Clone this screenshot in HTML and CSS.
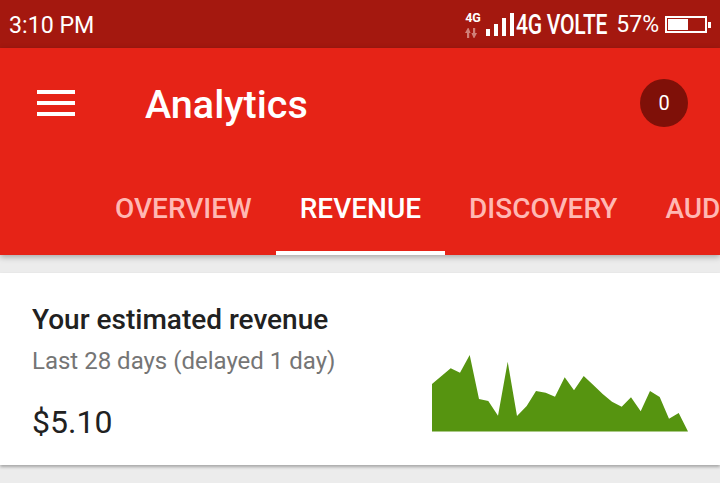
FILE: index.html
```html
<!DOCTYPE html>
<html lang="en">

<head>
    <meta charset="UTF-8">
    <meta name="viewport" content="width=device-width, initial-scale=1.0">
    <title>Analytics</title>
    <link rel="stylesheet" href="styles.css">
</head>

<body>
    <div class="status-bar">
        <span class="time">3:10 PM</span>
        <div class="status-right">
            <div class="net">
                <span class="net-label">4G</span>
                <svg class="net-arrows" width="12" height="10" viewBox="0 0 12 10">
                    <path d="M0 5 L2.8 0 H3.6 L5.6 5 H4.2 V10 H2 V5 Z M6.4 5 H8 V0 H10.2 V5 H12 L9.4 10 H8.6 Z" fill="#d08078"/>
                </svg>
            </div>
            <svg class="signal" width="28" height="23" viewBox="0 0 28 23">
                <rect x="0" y="16" width="4" height="7" fill="#fff"/>
                <rect x="8" y="11" width="4" height="12" fill="#fff"/>
                <rect x="16" y="5" width="4" height="18" fill="#fff"/>
                <rect x="24" y="0" width="4" height="23" fill="#fff"/>
            </svg>
            <span class="carrier">4G VOLTE</span>
            <span class="percent">57%</span>
            <div class="battery">
                <div class="battery-fill"></div>
            </div>
            <div class="battery-tip"></div>
        </div>
    </div>

    <header class="app-bar">
        <div class="toolbar">
            <div class="menu-icon">
                <span></span>
                <span></span>
                <span></span>
            </div>
            <h1>Analytics</h1>
            <div class="badge">0</div>
        </div>
        <nav class="tabs">
            <div class="tab">OVERVIEW</div>
            <div class="tab active">REVENUE</div>
            <div class="tab">DISCOVERY</div>
            <div class="tab">AUDIENCE</div>
        </nav>
    </header>

    <section class="card">
        <div class="card-text">
            <h2>Your estimated revenue</h2>
            <p class="period">Last 28 days (delayed 1 day)</p>
            <p class="amount">$5.10</p>
        </div>
        <svg class="chart" width="256" height="77" viewBox="432 355 256 77">
            <polygon fill="#569410" points="432,384 450.7,368.3 460,372.7 469.7,355 479,399 488.3,401 498,415.7 507.7,361.7 517,416 526.7,406 536,391 545.7,392.7 555,396.7 564.7,377.3 574,390.3 583.7,376 593.3,385 602.7,394 612,401.7 621.7,406.7 631,397.3 640.7,411.3 650,391 659.7,397 669,418.7 678.7,413 688,431.5 432,431.5"/>
        </svg>
    </section>

    <section class="card-next"></section>
</body>

</html>
```

FILE: styles.css
```css
html, body {
    margin: 0;
    height: 503px;
    overflow: hidden;
}

body {
    background-color: #ececec;
    color: #212121;
    font-family: Roboto, "Liberation Sans", sans-serif;
}

.status-bar {
    height: 48px;
    background-color: #a4180f;
    color: #fff;
    display: flex;
    justify-content: space-between;
    align-items: center;
    padding: 0 9px;
    box-sizing: border-box;
}

.time {
    font-size: 23.2px;
    margin-top: 2px;
}

.status-right {
    display: flex;
    align-items: center;
    margin-top: 1px;
}

.net {
    width: 16px;
    display: flex;
    flex-direction: column;
    align-items: flex-start;
    margin-right: 5px;
}

.net-label {
    font-size: 12.5px;
    font-weight: 700;
    line-height: 12px;
    letter-spacing: -0.2px;
}

.net-arrows {
    margin-top: 4px;
}

.carrier {
    width: 90px;
    margin-left: 2px;
    font-size: 27px;
    font-weight: 500;
    white-space: nowrap;
    transform: scaleX(0.78);
    transform-origin: left center;
    letter-spacing: -0.3px;
}

.percent {
    margin-left: 10px;
    font-size: 23px;
}

.battery {
    width: 36px;
    height: 11px;
    margin-left: 6px;
    border: 2px solid #fff;
    padding: 1px;
}

.battery-fill {
    width: 20px;
    height: 11px;
    background-color: #fff;
}

.battery-tip {
    width: 3px;
    height: 6px;
    margin-left: 1px;
    background-color: #fff;
}

.app-bar {
    height: 207px;
    background-color: #e62317;
    color: #fff;
    box-shadow: 0 2px 6px rgba(0, 0, 0, 0.3);
    position: relative;
}

.toolbar {
    height: 111px;
    display: flex;
    align-items: center;
    padding: 0 32px 0 37px;
}

.menu-icon {
    width: 38px;
    height: 26px;
    display: flex;
    flex-direction: column;
    justify-content: space-between;
    margin-bottom: 2px;
}

.menu-icon span {
    height: 4px;
    background-color: #fff;
}

h1 {
    margin: 2px 0 0 70px;
    flex: 1;
    font-size: 39.5px;
    font-weight: 500;
}

.badge {
    width: 48px;
    height: 48px;
    margin-bottom: 2px;
    border-radius: 50%;
    background-color: #7f1008;
    font-size: 20px;
    display: flex;
    align-items: center;
    justify-content: center;
}

.tabs {
    height: 96px;
    display: flex;
    padding-left: 91px;
    overflow: hidden;
}

.tab {
    padding: 0 24px;
    font-size: 28px;
    font-weight: 500;
    line-height: 100px;
    height: 96px;
    box-sizing: border-box;
    color: #ffb8b3;
    white-space: nowrap;
}

.tab.active {
    color: #fff;
    border-bottom: 4px solid #fff;
}

.card {
    margin-top: 18px;
    height: 192px;
    background-color: #fff;
    box-shadow: 0 2px 3px rgba(0, 0, 0, 0.3);
    display: flex;
    justify-content: space-between;
    padding: 0 32px;
    box-sizing: border-box;
    position: relative;
}

.card-text {
    padding-top: 30px;
}

h2 {
    margin: 0;
    font-size: 28px;
    font-weight: 500;
    line-height: 34px;
}

.period {
    margin: 9px 0 0;
    font-size: 24px;
    line-height: 30px;
    color: #757575;
}

.amount {
    margin: 25px 0 0;
    font-size: 32px;
    line-height: 42px;
}

.chart {
    margin-top: 82px;
}

.card-next {
    margin-top: 18px;
    height: 20px;
    background-color: #fff;
}
```
